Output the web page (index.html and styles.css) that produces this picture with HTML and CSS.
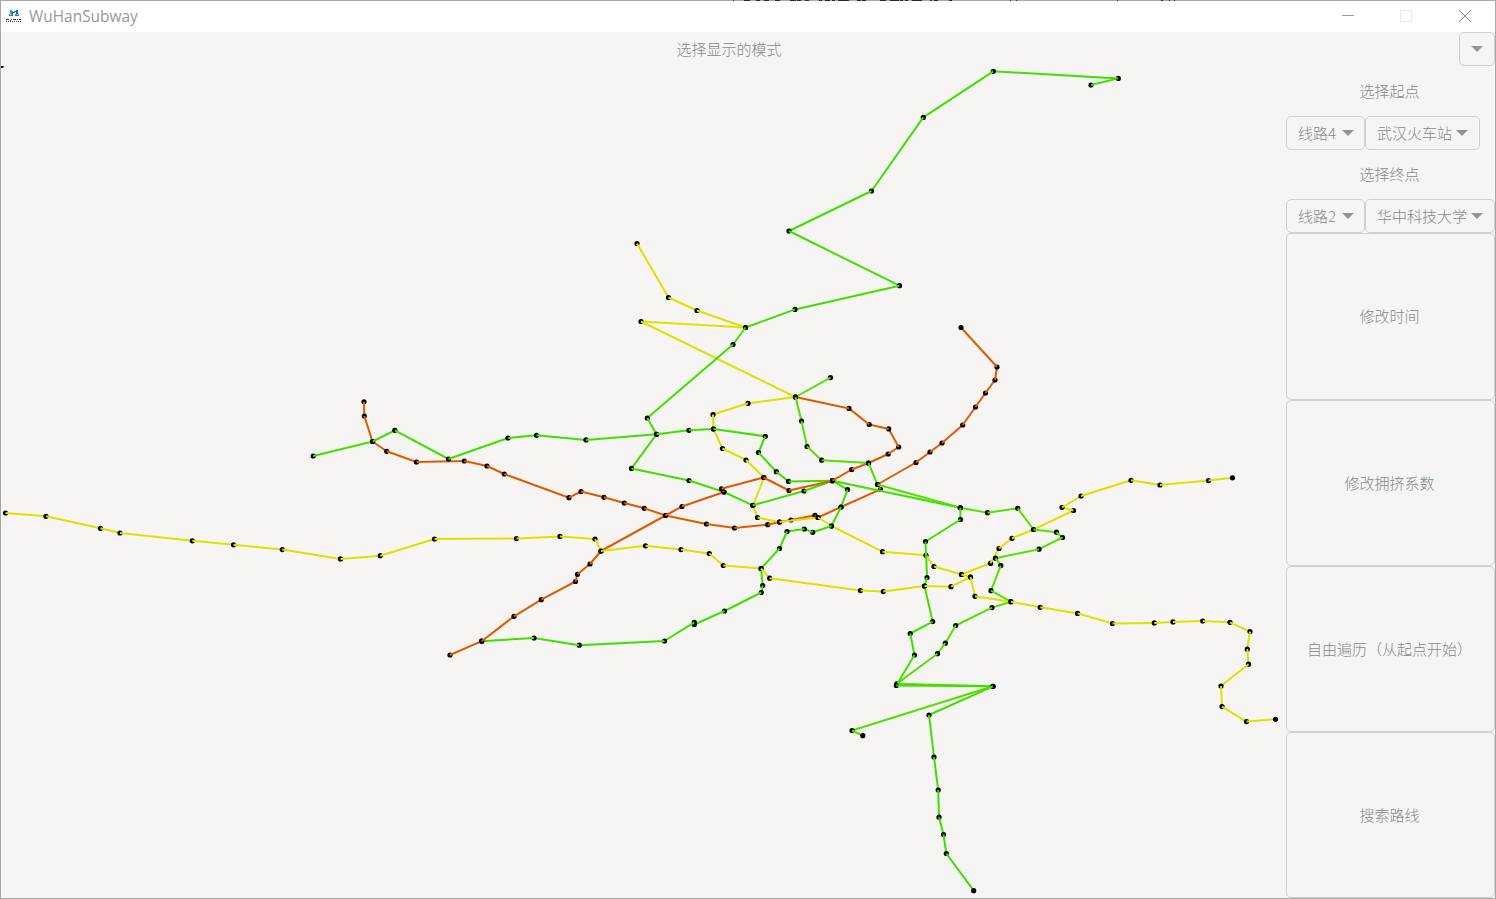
FILE: index.html
```html
<!DOCTYPE html>
<html lang="zh-CN">
<head>
<meta charset="utf-8">
<title>WuHanSubway</title>
<link rel="stylesheet" href="styles.css">
</head>
<body>
<div class="window">
  <svg class="edge" width="1496" height="1" viewBox="0 0 1496 1" shape-rendering="crispEdges">
    <path stroke="#2b2629" stroke-width="1" d="M733 .5h1M744 .5h6M756 .5h4M764 .5h5M775 .5h5M790 .5h6M797 .5h4M805 .5h4M819 .5h3M825 .5h5M832 .5h3M838 .5h11M857 .5h4M862 .5h4M880 .5h6M890 .5h9M900 .5h3M905 .5h3M912 .5h10M930 .5h2M934 .5h4M949 .5h3M1010 .5h1M1016 .5h1M1117 .5h1M1161 .5h2M1169 .5h1M1174 .5h1"/>
  </svg>
  <header class="titlebar">
    <svg class="app-icon" width="16" height="16" viewBox="0 0 16 16" shape-rendering="crispEdges">
      <path fill="#29a6dc" d="M4 1h2v1h1v1H6v2H4z"/>
      <path fill="#1668b4" d="M10 1h2v4h-2V3H9v1H7V3h1V2h2zM6 3h1v2H6z"/>
      <path fill="#2f83c4" d="M3 5h4v2H3zM9 5h4v2H9z"/>
      <path fill="#fff" d="M4 5h1v1H4zM11 5h1v1h-1z"/>
      <path fill="#3a3a3a" d="M0 10h3v1H0zM0 12h1v1H0zM2 12h1v1H2zM5 10h1v1H5zM4 11h1v2H4zM6 12h1v1H6zM7 10h3v1H7zM8 12h1v1H8zM11 10h1v1h-1zM10 12h1v1h-1zM13 10h2v1h-2zM12 12h1v1h-1zM14 12h1v1h-1z"/>
    </svg>
    <span class="title">WuHanSubway</span>
    <div class="controls">
      <svg width="58" height="31" viewBox="0 0 58 31"><path d="M17 14.5h12" stroke="#999"/></svg>
      <svg width="58" height="31" viewBox="0 0 58 31"><rect x="17.5" y="9.5" width="11" height="11" fill="none" stroke="#e8e8e8"/></svg>
      <svg width="54" height="31" viewBox="0 0 54 31"><path d="M18 9l12 12M30 9L18 21" stroke="#888"/></svg>
    </div>
  </header>
  <div class="modebar">
    <span class="mode-label">选择显示的模式</span>
    <button class="combo combo-empty"><i class="arrow"></i></button>
  </div>
  <main class="content">
    <svg class="map" id="map" width="1285" height="832" viewBox="1 66 1285 832"></svg>
    <aside class="side">
      <div class="label">选择起点</div>
      <div class="row">
        <button class="combo line">线路4<i class="arrow"></i></button>
        <button class="combo">武汉火车站<i class="arrow"></i></button>
      </div>
      <div class="label">选择终点</div>
      <div class="row">
        <button class="combo line">线路2<i class="arrow"></i></button>
        <button class="combo">华中科技大学<i class="arrow"></i></button>
      </div>
      <div class="actions">
        <button class="action">修改时间</button>
        <button class="action">修改拥挤系数</button>
        <button class="action">自由遍历（从起点开始）</button>
        <button class="action">搜索路线</button>
      </div>
    </aside>
  </main>
</div>
<script src="map.js"></script>
</body>
</html>
```

FILE: styles.css
```css
* { box-sizing: border-box; }
body {
  margin: 0;
  font-family: "Noto Sans CJK SC", "Noto Sans", sans-serif;
  font-weight: 300;
  font-size: 15px;
  color: #85898a;
}
.window {
  position: relative;
  width: 1496px;
  height: 899px;
  border: 1px solid #a8a8a8;
  background: #f6f5f4;
  display: flex;
  flex-direction: column;
  overflow: hidden;
}
/* Content behind the window showing through its top border */
.edge {
  position: absolute;
  top: -1px;
  left: -1px;
}
.window { overflow: visible; }
.titlebar {
  height: 31px;
  flex: none;
  background: #fff;
  display: flex;
  align-items: center;
}
.app-icon { margin-left: 5px; }
.title {
  margin-left: 7px;
  font: 400 15.45px/31px "Open Sans", sans-serif;
  color: #999;
}
.controls { display: flex; margin-left: auto; }
.controls svg { display: block; }
.modebar {
  height: 34px;
  flex: none;
  display: flex;
}
.mode-label {
  flex: 1;
  padding-right: 2px;
  text-align: center;
  line-height: 34px;
}
button {
  font: inherit;
  color: inherit;
  background: #f6f5f4;
  border: 1px solid #d5d0cc;
  border-radius: 5px;
  padding: 0;
  margin: 0;
  white-space: nowrap;
}
.combo {
  height: 34px;
  padding: 0 11px;
  display: flex;
  align-items: center;
  line-height: 32px;
}
.combo-empty { width: 36px; }
.arrow {
  border: 6px solid transparent;
  border-top-color: #929595;
  border-bottom: 0;
  margin-left: 4px;
}
.combo-empty .arrow { margin-left: 0; }
.content { display: flex; flex: 1; min-height: 0; }
.map { display: block; flex: none; }
.side {
  width: 209px;
  display: flex;
  flex-direction: column;
}
.label {
  height: 50px;
  line-height: 50px;
  padding-right: 2px;
  text-align: center;
}
.row { display: flex; height: 34px; }
.row + .label { height: 49px; line-height: 48px; }
.combo.line { width: 79px; padding: 0 10px 0 11px; }
.combo.line .arrow { margin-left: auto; }
.actions {
  flex: 1;
  display: grid;
  grid-template-rows: 167px 166px 166px 166px;
}
.action { padding: 0 2px 2px 0; }
```

FILE: map.js
```js
const NS = "http://www.w3.org/2000/svg";
const map = document.getElementById("map");
const G = "#3fe000", L = "#54e000", Y = "#e0e000", O = "#e05a00";

const routes = [
  [O, "364,401.8 364.3,416 372.5,441.5 386.7,451.3 416.5,462 464.3,461 487,466 504.3,474 569,497.7 581,491.5 604,497.3 624.3,503 644.3,508.3 665.5,515.5 706.5,524 734.5,528 767.7,524.7 779.5,522 791,520 815,515.3 818,517.5 841,507 880.5,489.3 877.5,484.5 916,462.5 930,452 942,443 962.7,425 975.5,407 985.5,393 995,380 997,367 961,327.5"],
  [Y, "637,243.5 668.5,297.5 697,310.5 745.5,327.5 641,321.5 795.5,397 748,403.3 713,414.5 713.5,429 722.5,448.5 746,460 764,477.5 753,505.5 757.5,517.5 779.5,522 818,517.5 831.5,526 882.5,551.7 926,555.3 934,566.5 961.5,574.5 990.5,563.3"],
  [Y, "961.5,574.5 970.5,577"],
  [Y, "990.5,563.3 999,548.5 1012,538.3 1033.5,529.5 1073.5,510.5 1062,507.5 1081,496 1131,480.3 1160,485 1208.5,480.6 1232.5,477.8"],
  [G, "1091,85 1118.3,78.4 993.3,71.3 923.3,117.4 871.5,191 789,231 899.5,285.7 795,309.4 745.5,327.5 733,344.5 647.3,418 656.5,434.3 631.5,468.4 689,480.5 724,492 752.7,505.3 804,491 832.5,480.7 960.3,507.8"],
  [G, "313.2,456 372.7,441.5 394.8,430.3 448.5,459 508,438 536.5,435.3 586,439.9 656.5,434.3 689,430.3 713.5,429 765.3,436.3 758.5,452.5 776.3,471.7 788.5,481.4 832.5,480.7 847.5,489.6 841,507 831.5,526 812.7,532.3 804.3,529 787,531.5 779.5,548.5 761,568.5 762.7,585.5 761.3,592.5 724.5,611 694.3,624.5 694.3,622.3 664.5,641 579.2,645.2 534,638 481.7,641.2"],
  [O, "450,655 481.7,641.2 514,616.3 541.3,599.7 575.5,581.5 577.5,574.3 590,564 601,551 665.5,515.5 682,506.5 724,492 721.5,488.8 763.5,477.5 789,490.5 832.5,480.7 851.7,469.5 868.5,463 888.2,454 898.7,447 888.7,428.9 869.2,424.5 849,408.4 795.5,397"],
  [L, "830.5,377.6 795.5,397 801.5,421 807,446.5 821.7,460.2 868.5,463 877.5,484.5 960.3,507.8 987.5,512.7 1017.7,508.3 1033.5,529.5 1056.5,532.2 1062.5,537.5 1039,549.2 995.5,558.2 1000.8,565.6 991,590.7 1010.8,601.7 992,607.6 955.7,625.5 945.3,643.2 937.5,653.7 896.8,683.8 993,686.3 852,730.5 862.8,735.7"],
  [G, "960.3,507.8 960.5,519.5 925.5,541.5 927,577.5 924.5,586 932.7,621.6 910.2,633.5 914.5,655 896.3,685.5 993,686.3 929,715 934,757 938.2,790 939,817.2 943.5,834.5 946.3,853.5 973.7,890.7"],
  [Y, "5.5,513 46,516.3 100.5,528.3 120,533 192.3,540.8 233.5,544.8 282.3,549.6 340.5,558.9 380.3,555.7 434.5,539 516.5,538.5 560,536.4 595,539 601,551 645.5,545.8 681,549.6 709.3,553.5 723.3,565.5 761,568.5 769.7,578.2 860.5,590.6 883.3,591.6 924.5,586 951,586.7 970.5,577 975,596.3 1010.8,601.7 1040.2,607.3 1077.6,613.4 1112.5,623.5 1154.3,622.9 1173,621.9 1202.7,621 1230,622.3 1250,631.6 1247.3,649.2 1248.5,664.2 1221,686 1222,706.6 1246.5,721.6 1275.5,719.3"]
];

function add(tag, attrs) {
  const el = document.createElementNS(NS, tag);
  for (const k in attrs) el.setAttribute(k, attrs[k]);
  map.appendChild(el);
}

// Each station's dot is painted first, then the track leaving it.
for (const [color, text] of routes) {
  const pts = text.split(" ").map(p => p.split(",").map(Number));
  pts.forEach(([x, y], i) => {
    add("circle", { cx: x, cy: y, r: 2.6, fill: "#000" });
    const next = pts[i + 1];
    if (next) add("line", { x1: x, y1: y, x2: next[0], y2: next[1], stroke: color, "stroke-width": 2 });
  });
}
add("path", { d: "M1 66h3l-1 2H1z", fill: "#000" });
```
